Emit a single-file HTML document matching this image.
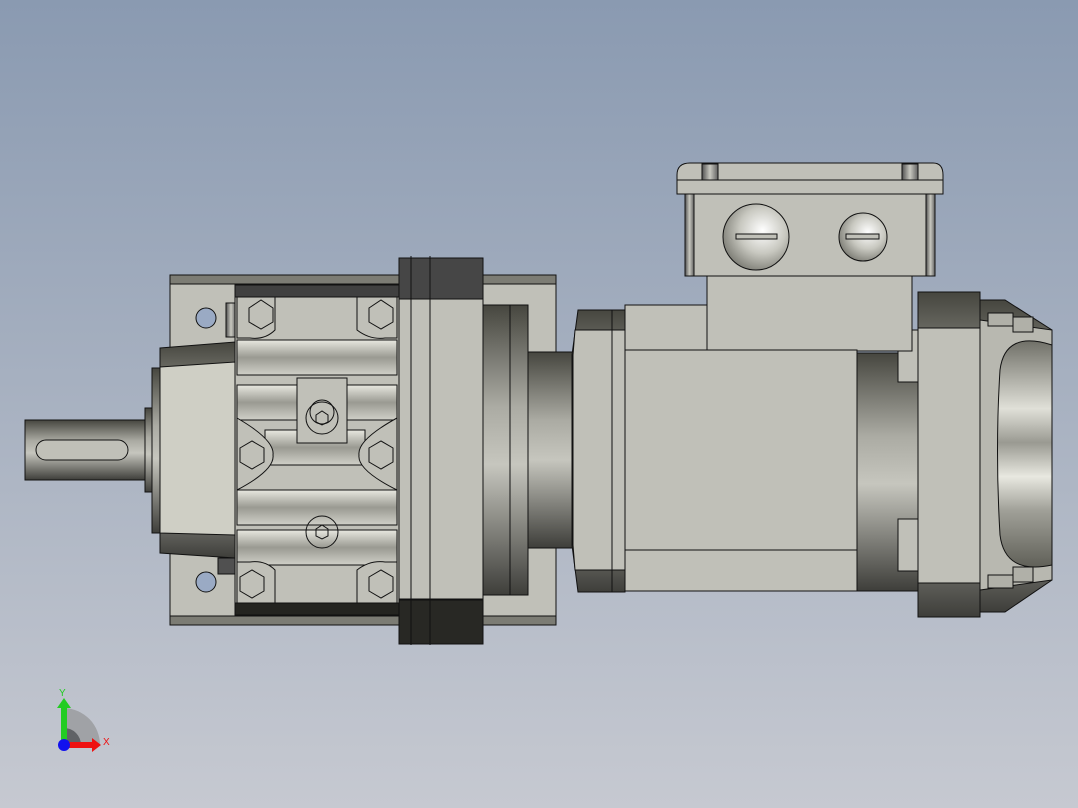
<!DOCTYPE html>
<html><head><meta charset="utf-8"><style>html,body{margin:0;padding:0;width:1078px;height:808px;overflow:hidden}svg{display:block}</style></head><body>
<svg width="1078" height="808" viewBox="0 0 1078 808" xmlns="http://www.w3.org/2000/svg" stroke="#111" stroke-width="1">
<defs>
<linearGradient id="bg" x1="0" y1="0" x2="0" y2="1"><stop offset="0" stop-color="#8a9ab1"/><stop offset="1" stop-color="#c6c9d1"/></linearGradient>
<linearGradient id="cyl" x1="0" y1="0" x2="0" y2="1"><stop offset="0" stop-color="#46463f"/><stop offset=".35" stop-color="#ababa3"/><stop offset=".55" stop-color="#c6c6be"/><stop offset="1" stop-color="#3e3e3a"/></linearGradient>
<linearGradient id="cylh" x1="0" y1="0" x2="1" y2="0"><stop offset="0" stop-color="#505050"/><stop offset=".5" stop-color="#c8c8c0"/><stop offset="1" stop-color="#606060"/></linearGradient>
<linearGradient id="rib" x1="0" y1="0" x2="0" y2="1"><stop offset="0" stop-color="#e8e8e0"/><stop offset=".5" stop-color="#9a9a92"/><stop offset="1" stop-color="#d0d0c8"/></linearGradient>
<radialGradient id="scr" cx=".6" cy=".4" r=".7"><stop offset="0" stop-color="#fff"/><stop offset=".5" stop-color="#c8c8c0"/><stop offset="1" stop-color="#707068"/></radialGradient>
<linearGradient id="fan" x1="0" y1="0" x2="0" y2="1"><stop offset="0" stop-color="#707068"/><stop offset=".3" stop-color="#e0e0d8"/><stop offset=".45" stop-color="#9a9a92"/><stop offset=".6" stop-color="#e8e8e0"/><stop offset=".75" stop-color="#a0a098"/><stop offset="1" stop-color="#606058"/></linearGradient>
</defs>
<rect width="1078" height="808" fill="url(#bg)" stroke="none"/>
<rect x="25" y="420" width="128" height="60" fill="url(#cyl)"/>
<rect x="36" y="440" width="92" height="20" rx="10" fill="#c0c0b8"/>
<rect x="145" y="408" width="10" height="84" fill="url(#cyl)"/>
<rect x="170" y="275" width="386" height="350" fill="#c0c0b8"/>
<rect x="170" y="275" width="386" height="9" fill="#7c7c74"/>
<rect x="170" y="616" width="386" height="9" fill="#7c7c74"/>
<circle cx="206" cy="318" r="10" fill="#9aaac4"/>
<circle cx="206" cy="582" r="10" fill="#9aaac4"/>
<rect x="226" y="303" width="10" height="34" fill="url(#cylh)"/>
<rect x="218" y="558" width="18" height="16" fill="#505050"/>
<rect x="152" y="368" width="10" height="165" fill="url(#cyl)"/>
<path d="M160 348 L235 342 L235 558 L160 553 Z" fill="url(#cyl)"/>
<path d="M160 367 L235 362 L235 535 L160 533 Z" fill="#cfcfc5"/>
<rect x="235" y="285" width="165" height="330" fill="#c0c0b8"/>
<rect x="235" y="285" width="165" height="12" fill="#404040"/>
<rect x="235" y="603" width="165" height="12" fill="#242420"/>
<g fill="url(#rib)">
<rect x="237" y="340" width="160" height="35"/>
<rect x="237" y="385" width="160" height="35"/>
<rect x="237" y="490" width="160" height="35"/>
<rect x="237" y="530" width="160" height="35"/>
<rect x="265" y="430" width="100" height="35"/>
</g>
<g fill="#c0c0b8">
<path d="M237 297 H275 L275 330 Q265 340 250 338 H237 Z"/>
<path d="M397 297 H357 L357 330 Q370 340 385 338 H397 Z"/>
<path d="M237 603 H275 L275 570 Q265 560 250 562 H237 Z"/>
<path d="M397 603 H357 L357 570 Q370 560 385 562 H397 Z"/>
<path d="M237 418 Q275 440 273 455 Q275 470 237 490 Z"/>
<path d="M397 418 Q357 440 359 455 Q357 470 397 490 Z"/>
</g>
<g fill="none">
<polygon points="250,316 262,308 274,316 274,330 262,337 250,330" transform="translate(-1,-8)"/>
<polygon points="369,308 381,300 393,308 393,322 381,329 369,322"/>
<polygon points="238,448 250,441 262,448 262,462 250,469 238,462" transform="translate(2,0)"/>
<polygon points="369,448 381,441 393,448 393,462 381,469 369,462"/>
<polygon points="240,577 252,570 264,577 264,591 252,598 240,591"/>
<polygon points="369,577 381,570 393,577 393,591 381,598 369,591"/>
</g>
<rect x="297" y="378" width="50" height="65" fill="#c0c0b8"/>
<circle cx="322" cy="418" r="16" fill="none"/><circle cx="322" cy="412" r="12" fill="none"/>
<polygon points="316,415 322,411 328,415 328,422 322,425 316,422" fill="none"/>
<circle cx="322" cy="532" r="16" fill="none"/>
<polygon points="316,529 322,525 328,529 328,536 322,539 316,536" fill="none"/>
<rect x="399" y="258" width="84" height="386" fill="#464646"/>
<rect x="399" y="600" width="84" height="44" fill="#282824"/>
<rect x="399" y="299" width="84" height="300" fill="#c0c0b8"/>
<line x1="411" y1="256" x2="411" y2="645"/><line x1="430" y1="256" x2="430" y2="645"/>
<rect x="483" y="305" width="45" height="290" fill="url(#cyl)"/>
<line x1="510" y1="305" x2="510" y2="595"/>
<rect x="528" y="352" width="46" height="196" fill="url(#cyl)"/>
<path d="M578 310 L625 310 L625 592 L578 592 L572 545 L572 355 Z" fill="url(#cyl)"/>
<path d="M575 330 L625 330 L625 570 L575 570 L573 545 L573 355 Z" fill="#c0c0b8"/>
<line x1="612" y1="310" x2="612" y2="592"/>
<rect x="625" y="305" width="85" height="45" fill="#c0c0b8"/>
<rect x="855" y="353" width="64" height="238" fill="url(#cyl)"/>
<rect x="898" y="330" width="20" height="52" fill="#c0c0b8"/>
<rect x="898" y="519" width="20" height="52" fill="#c0c0b8"/>
<rect x="707" y="276" width="205" height="75" fill="#c0c0b8"/>
<rect x="685" y="193" width="250" height="83" fill="#c0c0b8"/>
<rect x="685" y="193" width="9" height="83" fill="url(#cylh)"/>
<rect x="926" y="193" width="9" height="83" fill="url(#cylh)"/>
<path d="M690 163 H933 Q943 163 943 175 V194 H677 V175 Q677 163 690 163 Z" fill="#c0c0b8"/>
<rect x="702" y="164" width="16" height="16" fill="url(#cylh)"/>
<rect x="902" y="164" width="16" height="16" fill="url(#cylh)"/>
<line x1="677" y1="180" x2="943" y2="180"/>
<circle cx="756" cy="237" r="33" fill="url(#scr)"/>
<rect x="736" y="234" width="41" height="5" fill="#c0c0b8"/>
<circle cx="863" cy="237" r="24" fill="url(#scr)"/>
<rect x="846" y="234" width="33" height="5" fill="#c0c0b8"/>
<rect x="625" y="350" width="232" height="241" fill="#c0c0b8"/>
<line x1="625" y1="550" x2="857" y2="550"/>
<rect x="918" y="292" width="62" height="325" fill="url(#cyl)"/>
<rect x="918" y="328" width="62" height="255" fill="#c0c0b8"/>
<path d="M980 300 L1005 300 L1052 330 L1052 580 L1005 612 L980 612 Z" fill="url(#cyl)"/>
<path d="M980 320 L1052 330 L1052 580 L980 590 Z" fill="#b8b8b0"/>
<path d="M1000 370 Q1005 330 1052 345 V565 Q1005 575 1000 535 Q995 450 1000 370 Z" fill="url(#fan)"/>
<rect x="988" y="313" width="25" height="13" fill="#b0b0a8"/><rect x="1013" y="317" width="20" height="15" fill="#b0b0a8"/>
<rect x="988" y="575" width="25" height="13" fill="#b0b0a8"/><rect x="1013" y="567" width="20" height="15" fill="#b0b0a8"/>
<g stroke="none">
<path d="M64 745 V708 A37 37 0 0 1 100 745 Z" fill="#a0a2a6"/>
<path d="M64 745 V728 A17 17 0 0 1 81 745 Z" fill="#606266"/>
<rect x="61" y="705" width="6" height="40" fill="#22cc22"/>
<polygon points="57,708 64,698 71,708" fill="#22cc22"/>
<rect x="64" y="742" width="30" height="6" fill="#ee1111"/>
<polygon points="92,738 101,745 92,752" fill="#ee1111"/>
<circle cx="64" cy="745" r="6" fill="#1111ee"/>
<text x="59" y="696" font-family="Liberation Sans, sans-serif" font-size="10" fill="#22cc22">Y</text>
<text x="103" y="745" font-family="Liberation Sans, sans-serif" font-size="10" fill="#ee1111">X</text>
</g>
</svg>
</body></html>
